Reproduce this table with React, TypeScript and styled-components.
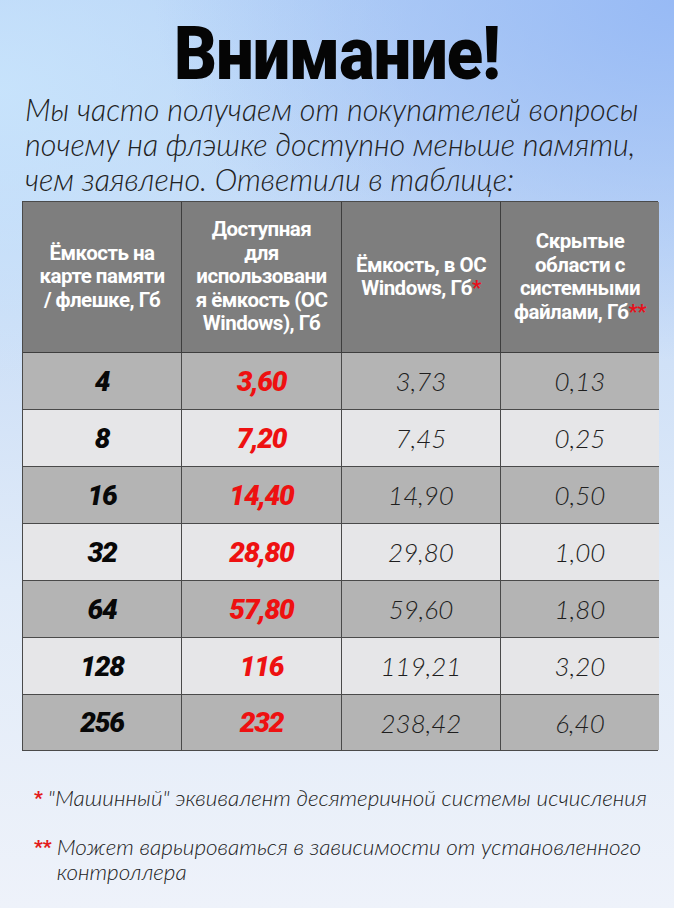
import styled, { createGlobalStyle } from 'styled-components'

type RowType = {
  size: string
  available: string
  windows: string
  hidden: string
}

const rows: RowType[] = [
  { size: '4', available: '3,60', windows: '3,73', hidden: '0,13' },
  { size: '8', available: '7,20', windows: '7,45', hidden: '0,25' },
  { size: '16', available: '14,40', windows: '14,90', hidden: '0,50' },
  { size: '32', available: '28,80', windows: '29,80', hidden: '1,00' },
  { size: '64', available: '57,80', windows: '59,60', hidden: '1,80' },
  { size: '128', available: '116', windows: '119,21', hidden: '3,20' },
  { size: '256', available: '232', windows: '238,42', hidden: '6,40' },
]

const App = () => {
  return (
    <Page>
      <GlobalStyle />
      <Title>
        <TitleText>Внимание!</TitleText>
      </Title>
      <Intro>
        Мы часто получаем от покупателей вопросы
        <br />
        почему на флэшке доступно меньше памяти,
        <br />
        чем заявлено. Ответили в таблице:
      </Intro>

      <Table>
        <HeadCell>
          <HeadText>
            Ёмкость на
            <br />
            карте памяти
            <br />/ флешке, Гб
          </HeadText>
        </HeadCell>
        <HeadCell>
          <HeadText>
            Доступная
            <br />
            для
            <br />
            использовани
            <br />я ёмкость (ОС
            <br />
            Windows), Гб
          </HeadText>
        </HeadCell>
        <HeadCell>
          <HeadText>
            Ёмкость, в ОС
            <br />
            Windows, Гб<Star>*</Star>
          </HeadText>
        </HeadCell>
        <HeadCell>
          <HeadText>
            Скрытые
            <br />
            области с
            <br />
            системными
            <br />
            файлами, Гб<Star>**</Star>
          </HeadText>
        </HeadCell>

        {rows.map((row, i) => (
          <Row key={row.size} light={i % 2 === 1} last={i === rows.length - 1}>
            <Cell>
              <SizeValue>{row.size}</SizeValue>
            </Cell>
            <Cell>
              <AvailableValue>{row.available}</AvailableValue>
            </Cell>
            <Cell>
              <PlainValue>{row.windows}</PlainValue>
            </Cell>
            <Cell>
              <PlainValue>{row.hidden}</PlainValue>
            </Cell>
          </Row>
        ))}
      </Table>

      <Notes>
        <Note>
          <NoteMark>*</NoteMark>
          <span>"Машинный" эквивалент десятеричной системы исчисления</span>
        </Note>
        <Note>
          <NoteMark>**</NoteMark>
          <span>
            Может варьироваться в зависимости от установленного
            <br />
            контроллера
          </span>
        </Note>
      </Notes>
    </Page>
  )
}

export default App

const GlobalStyle = createGlobalStyle`
  html, body {
    margin: 0;
    padding: 0;
  }
  body {
    width: 674px;
    height: 908px;
    overflow: hidden;
  }
`

const Page = styled.div`
  width: 674px;
  height: 908px;
  box-sizing: border-box;
  padding-top: 15px;
  font-family: 'Lato', 'Open Sans', sans-serif;
  color: #1c1c1c;
  background:
    radial-gradient(ellipse 520px 360px at 100% 0%, rgba(150, 185, 245, 0.95), rgba(150, 185, 245, 0) 100%),
    radial-gradient(ellipse 420px 300px at 0% 10%, rgba(200, 228, 252, 0.9), rgba(200, 228, 252, 0) 100%),
    linear-gradient(180deg, #b7d2f6 0%, #c9ddf7 30%, #e1ebf8 65%, #eef2fa 100%);
  overflow: hidden;
`

const Title = styled.h1`
  margin: 0;
  height: 78px;
  display: flex;
  justify-content: center;
  align-items: center;
`

const TitleText = styled.span`
  display: inline-block;
  font-family: 'Roboto', 'Inter', sans-serif;
  font-weight: 900;
  font-size: 74px;
  line-height: 78px;
  letter-spacing: -1px;
  color: #050505;
  transform: scaleX(0.9);
`

const Intro = styled.p`
  margin: -1px 0 0 25px;
  font-style: italic;
  font-weight: 300;
  font-size: 30.5px;
  line-height: 35px;
  color: #222;
  white-space: nowrap;
`

const Table = styled.div`
  margin: 4px 0 0 22px;
  width: 636px;
  display: grid;
  grid-template-columns: 159px 160px 159px 158px;
  border: 1.5px solid #4a4a4a;
  box-sizing: border-box;
`

const HeadCell = styled.div`
  height: 151px;
  background: #7e7e7e;
  border-right: 1.5px solid #3e3e3e;
  border-bottom: 1.5px solid #3e3e3e;
  box-sizing: border-box;
  display: flex;
  align-items: center;
  justify-content: center;

  &:nth-child(4) {
    border-right: none;
  }
`

const HeadText = styled.span`
  text-align: center;
  font-family: 'Roboto', sans-serif;
  font-weight: 700;
  font-size: 20.5px;
  line-height: 23.5px;
  letter-spacing: -0.5px;
  color: #fff;
  white-space: nowrap;
`

const Star = styled.span`
  color: #e8101a;
`

const Row = styled.div<{ light: boolean; last: boolean }>`
  display: contents;

  & > div {
    height: ${(p) => (p.last ? '55px' : '57px')};
    background: ${(p) => (p.light ? '#e6e6e8' : '#b4b4b4')};
    border-bottom: ${(p) => (p.last ? 'none' : '1.5px solid #4a4a4a')};
  }
`

const Cell = styled.div`
  box-sizing: border-box;
  display: flex;
  align-items: center;
  justify-content: center;
  border-right: 1.5px solid #4a4a4a;

  &:last-child {
    border-right: none;
  }
`

const SizeValue = styled.span`
  font-family: 'Roboto', sans-serif;
  font-weight: 900;
  font-style: italic;
  font-size: 28px;
  letter-spacing: -1.2px;
  color: #080808;
`

const AvailableValue = styled(SizeValue)`
  color: #ee1111;
`

const PlainValue = styled.span`
  font-family: 'Lato', sans-serif;
  font-weight: 300;
  font-style: italic;
  font-size: 26px;
  color: #1e1e1e;
`

const Notes = styled.div`
  margin: 34px 0 0 34px;
  display: flex;
  flex-direction: column;
  gap: 24px;
`

const Note = styled.div`
  display: flex;
  align-items: flex-start;
  gap: 5px;
  font-style: italic;
  font-weight: 300;
  font-size: 22.5px;
  line-height: 25px;
  color: #222;
  white-space: nowrap;
`

const NoteMark = styled.span`
  font-family: 'Roboto', sans-serif;
  font-weight: 900;
  font-style: normal;
  font-size: 19px;
  color: #e31b1b;
  line-height: 25px;
`
